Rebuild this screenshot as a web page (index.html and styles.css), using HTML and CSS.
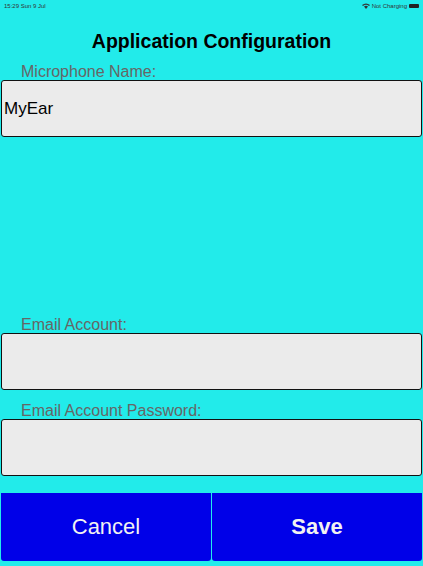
FILE: index.html
```html
<!DOCTYPE html>
<html lang="en">
<head>
<meta charset="UTF-8">
<meta name="viewport" content="width=device-width, initial-scale=1.0">
<title>Application Configuration</title>
<link rel="stylesheet" href="styles.css">
</head>
<body>
    <div class="status-bar">
        <span>15:29 Sun 9 Jul</span>
        <span class="status-right">
            <svg width="8" height="6" viewBox="0 0 8 6"><path d="M0 2 Q4 -1 8 2 L7 3 Q4 0.5 1 3 Z M2 3.5 Q4 2 6 3.5 L4 6 Z" fill="#333"/></svg>
            Not Charging
            <span class="battery"></span>
        </span>
    </div>
    <h1>Application Configuration</h1>
    <div class="field first">
        <label for="mic">Microphone Name:</label>
        <input type="text" class="text-input" id="mic" value="MyEar">
    </div>
    <div class="spacer"></div>
    <div class="field">
        <label for="email">Email Account:</label>
        <input type="email" class="text-input" id="email">
    </div>
    <div class="field">
        <label for="password">Email Account Password:</label>
        <input type="password" class="text-input" id="password">
    </div>
    <div class="buttons">
        <button type="button" class="action-button">Cancel</button>
        <button type="button" class="action-button save-button">Save</button>
    </div>
</body>
</html>
```

FILE: styles.css
```css
body {
    margin: 0;
    padding: 0;
    height: 566px;
    display: flex;
    flex-direction: column;
    background: #22ebea;
    font-family: "Liberation Sans", Arial, sans-serif;
    overflow: hidden;
}

.status-bar {
    height: 12px;
    display: flex;
    justify-content: space-between;
    align-items: center;
    padding: 0 4px;
    font-size: 6px;
    color: #333;
}

.status-right {
    display: flex;
    align-items: center;
    gap: 2px;
}

.battery {
    width: 10px;
    height: 4px;
    background: #222;
    border-radius: 1px;
}

h1 {
    margin: 18px 0 0;
    text-align: center;
    font-size: 19.5px;
    font-weight: bold;
    color: black;
    line-height: 22px;
}

.field {
    display: flex;
    flex-direction: column;
}

label {
    font-size: 16px;
    color: #666;
    margin-left: 21px;
    line-height: 17px;
}

.first label {
    margin-top: 11px;
}

.field + .field label {
    margin-top: 12px;
}

.text-input {
    box-sizing: border-box;
    height: 57px;
    margin: 0 1px;
    border: 1px solid #111;
    border-radius: 3px;
    background: #ebebeb;
    font-family: "Liberation Sans", Arial, sans-serif;
    font-size: 17px;
    color: black;
    padding: 0 2px;
    outline: none;
}

.spacer {
    flex: 1;
}

.buttons {
    display: flex;
    gap: 1px;
    margin: 17px 1px 5px;
}

.action-button {
    flex: 1;
    height: 68px;
    border: none;
    border-radius: 0 0 3px 3px;
    background: #0000e8;
    color: #f2f2f2;
    font-family: "Liberation Sans", Arial, sans-serif;
    font-size: 22px;
}

.save-button {
    font-weight: bold;
}
```
